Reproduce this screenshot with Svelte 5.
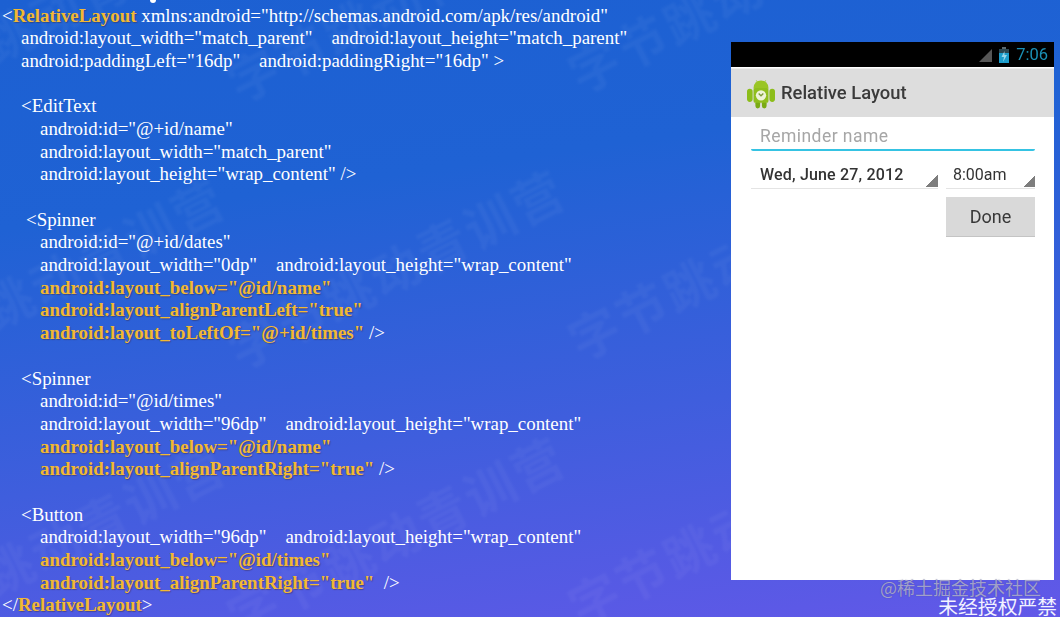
<script>
  const lines = [
    { i: 'i0', s: [['t', '<'], ['g', 'RelativeLayout'], ['t', ' xmlns:android="http://schemas.android.com/apk/res/android"']] },
    { i: 'i1', s: [['t', 'android:layout_width="match_parent"    android:layout_height="match_parent"']] },
    { i: 'i1', s: [['t', 'android:paddingLeft="16dp"    android:paddingRight="16dp" >']] },
    { i: 'i0', s: [] },
    { i: 'i1', s: [['t', '<EditText']] },
    { i: 'i2', s: [['t', 'android:id="@+id/name"']] },
    { i: 'i2', s: [['t', 'android:layout_width="match_parent"']] },
    { i: 'i2', s: [['t', 'android:layout_height="wrap_content" />']] },
    { i: 'i0', s: [] },
    { i: 'i1b', s: [['t', '<Spinner']] },
    { i: 'i2', s: [['t', 'android:id="@+id/dates"']] },
    { i: 'i2', s: [['t', 'android:layout_width="0dp"    android:layout_height="wrap_content"']] },
    { i: 'i2', s: [['g', 'android:layout_below="@id/name"']] },
    { i: 'i2', s: [['g', 'android:layout_alignParentLeft="true"']] },
    { i: 'i2', s: [['g', 'android:layout_toLeftOf="@+id/times"'], ['t', ' />']] },
    { i: 'i0', s: [] },
    { i: 'i1', s: [['t', '<Spinner']] },
    { i: 'i2', s: [['t', 'android:id="@id/times"']] },
    { i: 'i2', s: [['t', 'android:layout_width="96dp"    android:layout_height="wrap_content"']] },
    { i: 'i2', s: [['g', 'android:layout_below="@id/name"']] },
    { i: 'i2', s: [['g', 'android:layout_alignParentRight="true"'], ['t', ' />']] },
    { i: 'i0', s: [] },
    { i: 'i1', s: [['t', '<Button']] },
    { i: 'i2', s: [['t', 'android:layout_width="96dp"    android:layout_height="wrap_content"']] },
    { i: 'i2', s: [['g', 'android:layout_below="@id/times"']] },
    { i: 'i2', s: [['g', 'android:layout_alignParentRight="true"'], ['t', '  />']] },
    { i: 'i0', s: [['t', '</'], ['g', 'RelativeLayout'], ['t', '>']] }
  ];
  const marks = [
    [-110, 93], [-110, 360], [-110, 626],
    [230, 84], [230, 351], [230, 618],
    [571, 75], [571, 342], [571, 608]
  ];
</script>

<div class="slide">
  <div class="marks" aria-hidden="true">
    {#each marks as m}
      <span class="mark" style="left:{m[0]}px;top:{m[1]}px">字节跳动青训营</span>
    {/each}
  </div>
  <span class="tail"></span>

  <div class="code">
    {#each lines as line}
      <div class="line {line.i}">{#each line.s as seg}<span class={seg[0]}>{seg[1]}</span>{/each}</div>
    {/each}
  </div>

  <div class="phone">
    <div class="status">
      <svg class="signal" viewBox="0 0 14 14" width="14" height="14"><path d="M0 14 L13 1 V14 Z" fill="#565656"/></svg>
      <svg class="battery" viewBox="0 0 10 16" width="10" height="16">
        <rect x="3" y="0" width="4" height="2" fill="#5a6a70"/>
        <rect x="0" y="2" width="10" height="14" fill="#1b9ccb"/>
        <rect x="0" y="2" width="10" height="4" fill="#2a4650"/>
        <path d="M5.5 4 L2.5 10 H5 L4 15 L8 8 H5.5 Z" fill="#bfe9f5" opacity=".75"/>
      </svg>
      <span class="clock">7:06</span>
    </div>
    <div class="actionbar">
      <svg class="droid" viewBox="0 0 30 32" width="28" height="31">
        <rect x="0" y="11" width="6" height="14" rx="3" fill="#8cbd1a"/>
        <rect x="24" y="11" width="6" height="14" rx="3" fill="#8cbd1a"/>
        <rect x="9" y="24" width="5" height="8" rx="2.5" fill="#7aaa14"/>
        <rect x="16" y="24" width="5" height="8" rx="2.5" fill="#7aaa14"/>
        <path d="M10 2 L12 5 M20 2 L18 5" stroke="#9ac524" stroke-width="1"/>
        <path d="M7 11 V10 A8 8 0 0 1 23 10 V11 Z" fill="#9ac524"/>
        <rect x="7" y="10" width="16" height="16" rx="2" fill="#8fbe1c"/>
        <circle cx="15" cy="18" r="5.5" fill="#eef3d8"/>
        <path d="M12.5 16 L15 18.5 L17.5 16" stroke="#7d9c3a" stroke-width="1.4" fill="none"/>
      </svg>
      <span class="title">Relative Layout</span>
    </div>
    <div class="form">
      <div class="edit">Reminder name</div>
      <div class="spinners">
        <div class="spinner date"><span>Wed, June 27, 2012</span><i></i></div>
        <div class="spinner time"><span>8:00am</span><i></i></div>
      </div>
      <div class="done">Done</div>
    </div>
  </div>

  <div class="credit">
    <div class="juejin">@稀土掘金技术社区</div>
    <div class="notice">未经授权严禁</div>
  </div>
</div>

<style>
  :global(body) { margin: 0; }
  .slide {
    position: relative;
    width: 1060px;
    height: 617px;
    overflow: hidden;
    display: flex;
    justify-content: space-between;
    align-items: flex-start;
    background: linear-gradient(172deg, #1c60d2 0%, #1f62d4 30%, #3f5edd 65%, #6258e8 100%);
  }
  .marks { position: absolute; inset: 0; }
  .mark {
    position: absolute;
    transform: translateY(-50%) rotate(-27deg);
    transform-origin: 0 50%;
    white-space: nowrap;
    font: 700 50px "Noto Sans CJK SC", sans-serif;
    letter-spacing: 3px;
    color: rgba(255, 255, 255, 0.04);
    filter: blur(1px);
  }
  .tail {
    position: absolute;
    left: 150px;
    top: 0;
    width: 6px;
    height: 3px;
    border-radius: 0 0 3px 3px;
    background: #fff;
  }
  .code {
    position: relative;
    padding-top: 4.5px;
    font-family: "Liberation Serif", serif;
    font-size: 18.9px;
    line-height: 22.7px;
    color: #fff;
    white-space: pre;
  }
  .line { height: 22.7px; }
  .i0 { padding-left: 2px; }
  .i1 { padding-left: 21px; }
  .i1b { padding-left: 26px; }
  .i2 { padding-left: 40px; }
  .g {
    color: #f2b933;
    font-weight: 700;
    text-shadow: 1px 1px 1px rgba(60, 40, 60, 0.45);
  }
  .phone {
    position: relative;
    flex: none;
    width: 323px;
    height: 538px;
    margin: 42px 6px 0 0;
    background: #fff;
    filter: blur(0.5px);
    font-family: Roboto, sans-serif;
  }
  .status {
    height: 25px;
    background: #000;
    display: flex;
    align-items: center;
    justify-content: flex-end;
    gap: 4px;
    padding-right: 6px;
    box-sizing: border-box;
  }
  .signal { margin-right: 2px; }
  .battery { margin-right: 3px; }
  .clock { color: #1a8fb5; font-size: 16.5px; }
  .actionbar {
    height: 49px;
    margin-top: 1px;
    background: #dddddd;
    border-top: 1px solid #eeeeee;
    box-sizing: border-box;
    display: flex;
    align-items: center;
    gap: 6px;
    padding-left: 16px;
  }
  .title { font-size: 18.4px; font-weight: 500; color: #3a3a3a; margin-top: -2px; }
  .form { padding: 0 19px 0 20px; }
  .edit {
    height: 34px;
    box-sizing: border-box;
    padding: 9px 0 0 9px;
    font-size: 17.5px;
    line-height: 20px;
    letter-spacing: 0.45px;
    color: #a6a6a6;
    border-bottom: 2px solid #35c3e3;
    border-radius: 0 0 2px 2px;
  }
  .spinners { display: flex; justify-content: space-between; margin-top: 12px; }
  .spinner {
    position: relative;
    box-sizing: border-box;
    height: 26px;
    padding-top: 2px;
    font-size: 16px;
    line-height: 20px;
    color: #333;
    border-bottom: 1px solid #e4e4e4;
  }
  .spinner i {
    position: absolute;
    right: 0;
    bottom: 1px;
    width: 12px;
    height: 12px;
    background: linear-gradient(135deg, transparent 50%, #7d7d7d 50%);
  }
  .date { width: 187px; padding-left: 9px; font-weight: 500; letter-spacing: 0.18px; }
  .time { width: 89px; padding-left: 7px; }
  .done {
    width: 89px;
    height: 40px;
    margin: 8px 0 0 auto;
    background: #d9d9d9;
    border-bottom: 1px solid #c4c4c4;
    box-sizing: border-box;
    display: flex;
    align-items: center;
    justify-content: center;
    font-size: 18px;
    color: #383838;
  }
  .credit {
    position: absolute;
    right: 3px;
    bottom: 1px;
    text-align: right;
    font-family: "Noto Sans CJK SC", sans-serif;
  }
  .juejin {
    margin-right: 16px;
    font-size: 18px;
    line-height: 18px;
    color: rgba(190, 190, 215, 0.75);
    text-shadow: 0 0 1px rgba(50, 50, 90, 0.5);
  }
  .notice {
    font-size: 19.8px;
    line-height: 20px;
    color: #f2f2ff;
  }
</style>
